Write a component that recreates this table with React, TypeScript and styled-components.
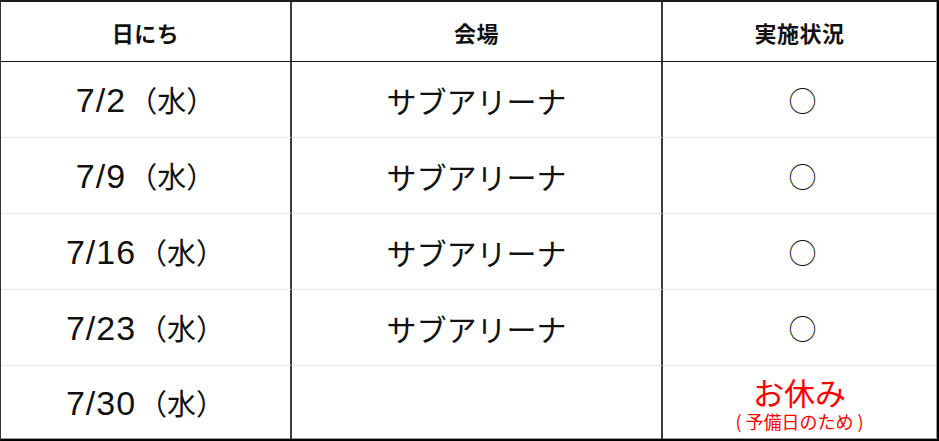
import styled, { createGlobalStyle } from "styled-components"

const GlobalStyle = createGlobalStyle`
    html, body {
        margin: 0;
        padding: 0;
        background: #fff;
    }
    body {
        font-family: "Noto Sans CJK JP", "Noto Sans", sans-serif;
        color: #111;
    }
`
const Frame = styled.div`
    width: 939px;
    height: 441px;
    box-sizing: border-box;
    border-style: solid;
    border-width: 2px 2px 2px 1px;
    border-color: #1c1c1c #000 #000 #333;
`
const Grid = styled.div`
    display: grid;
    grid-template-columns: 291px 371px 1fr;
    grid-template-rows: 60px repeat(4, 76px) 73px;
    height: 100%;
    box-sizing: border-box;
    border-right: 1px solid #9c9c9c;
    border-bottom: 1px solid #9c9c9c;
`
const Cell = styled.div<{ $divider?: boolean; $line: "head" | "row" | "none" }>`
    display: flex;
    flex-direction: column;
    align-items: center;
    justify-content: center;
    box-sizing: border-box;
    border-right: ${p => p.$divider ? "2px solid #3a3a3a" : "none"};
    border-bottom: ${p => p.$line === "head" ? "1px solid #111" : p.$line === "row" ? "1px solid #e9e9e9" : "none"};
`
const HeadText = styled.span`
    font-size: 22px;
    font-weight: 700;
    letter-spacing: 0.5px;
`
const DateText = styled.span`
    display: flex;
    align-items: baseline;
    font-size: 29px;
    line-height: 1;
`
const DateNum = styled.span`
    font-family: "Liberation Sans", Arial, sans-serif;
    font-size: 34px;
    letter-spacing: 1px;
    padding-right: 2px;
`
const VenueText = styled.span`
    font-size: 30px;
    line-height: 1;
`
const Mark = styled.span`
    font-size: 28px;
    line-height: 1;
    font-weight: 300;
    padding-left: 6px;
`
const Holiday = styled.span`
    font-size: 31px;
    line-height: 36px;
    color: #ff0000;
`
const HolidayNote = styled.span`
    font-size: 18px;
    line-height: 22px;
    color: #ff0000;
`

interface Row {
    date: string
    day: string
    venue: string
    held: boolean
}

const rows: Row[] = [
    { date: "7/2", day: "（水）", venue: "サブアリーナ", held: true },
    { date: "7/9", day: "（水）", venue: "サブアリーナ", held: true },
    { date: "7/16", day: "（水）", venue: "サブアリーナ", held: true },
    { date: "7/23", day: "（水）", venue: "サブアリーナ", held: true },
    { date: "7/30", day: "（水）", venue: "", held: false },
]

const App = () => {
    return <>
        <GlobalStyle />
        <Frame>
            <Grid>
                <Cell $divider $line="head"><HeadText>日にち</HeadText></Cell>
                <Cell $divider $line="head"><HeadText>会場</HeadText></Cell>
                <Cell $line="head"><HeadText>実施状況</HeadText></Cell>
                {rows.map((row, index) => {
                    const line = index === rows.length - 1 ? "none" : "row"
                    return [
                        <Cell key={`d-${index}`} $divider $line={line}>
                            <DateText><DateNum>{row.date}</DateNum>{row.day}</DateText>
                        </Cell>,
                        <Cell key={`v-${index}`} $divider $line={line}><VenueText>{row.venue}</VenueText></Cell>,
                        <Cell key={`s-${index}`} $line={line}>
                            {row.held
                                ? <Mark>○</Mark>
                                : <>
                                    <Holiday>お休み</Holiday>
                                    <HolidayNote>( 予備日のため )</HolidayNote>
                                </>}
                        </Cell>,
                    ]
                })}
            </Grid>
        </Frame>
    </>
}

export default App
